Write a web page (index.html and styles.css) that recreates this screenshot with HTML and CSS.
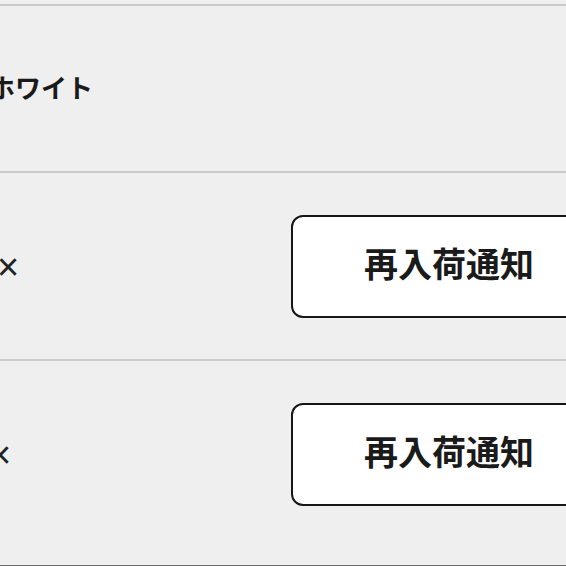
FILE: index.html
```html
<!DOCTYPE html>
<html lang="ja">
<head>
<meta charset="utf-8">
<title>在庫</title>
<link rel="stylesheet" href="styles.css">
</head>
<body>
<div class="list">
  <div class="row row-color">
    <span class="label label-color">ホワイト</span>
  </div>
  <div class="row row-size">
    <span class="label mark mark-a">×</span>
    <button class="notify" type="button">再入荷通知</button>
  </div>
  <div class="row row-size row-last">
    <span class="label mark mark-b">×</span>
    <button class="notify" type="button">再入荷通知</button>
  </div>
</div>
</body>
</html>
```

FILE: styles.css
```css
html, body {
  margin: 0;
  padding: 0;
  background: #efefef;
  overflow: hidden;
  width: 566px;
  height: 566px;
}

body {
  font-family: "Noto Sans CJK JP", "Noto Sans", sans-serif;
  color: #1a1a1a;
}

.list {
  padding-top: 4px;
}

.row {
  display: grid;
  grid-template-columns: 291px 316px;
  align-items: center;
  border-top: 2px solid #cbcbcb;
}

.row-color {
  height: 165px;
}

.row-size {
  padding: 42px 0 41px;
}

.row-last {
  padding: 42px 0 59px;
  border-bottom: 1px solid #6a6a6a;
}

.label {
  white-space: nowrap;
}

.label-color {
  margin-left: -11px;
  margin-top: -4px;
  font-size: 26px;
  font-weight: 700;
}

.mark {
  font-family: "Liberation Sans", sans-serif;
  font-size: 38px;
  line-height: 1;
  font-weight: 400;
  color: #222222;
}

.mark-a {
  margin-left: -3px;
}

.mark-b {
  margin-left: -11px;
}

.notify {
  box-sizing: border-box;
  width: 316px;
  height: 103px;
  border: 2px solid #161616;
  border-radius: 12px;
  background: #ffffff;
  font-family: "Noto Sans CJK JP", sans-serif;
  font-size: 34px;
  font-weight: 700;
  color: #1a1a1a;
  padding: 0 0 8px;
  cursor: pointer;
}
```
